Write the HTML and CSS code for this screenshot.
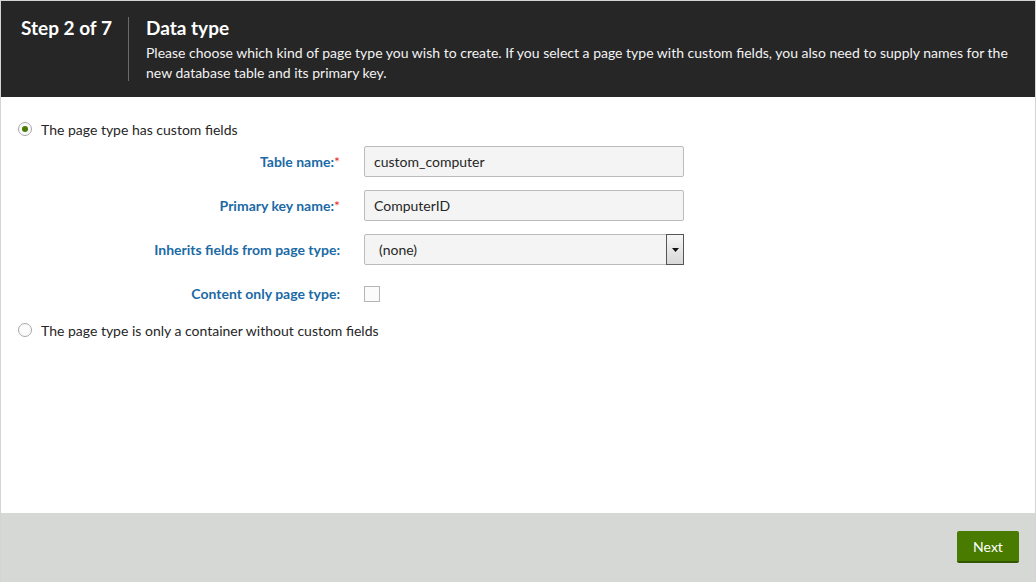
FILE: index.html
```html
<!DOCTYPE html>
<html>
<head>
<meta charset="utf-8">
<link rel="stylesheet" href="styles.css">
</head>
<body>
<div class="frame">
  <header class="header">
    <div class="step">Step 2 of 7</div>
    <div class="info">
      <h1 class="title">Data type</h1>
      <p class="desc">Please choose which kind of page type you wish to create. If you select a page type with custom fields, you also need to supply names for the new database table and its primary key.</p>
    </div>
  </header>
  <main class="content">
    <label class="radio-row">
      <span class="radio checked"></span>
      <span class="radio-label">The page type has custom fields</span>
    </label>
    <div class="form">
      <div class="label">Table name:<span class="req">*</span></div>
      <div class="field"><div class="input">custom_computer</div></div>
      <div class="label">Primary key name:<span class="req">*</span></div>
      <div class="field"><div class="input">ComputerID</div></div>
      <div class="label">Inherits fields from page type:</div>
      <div class="field">
        <div class="select">
          <span class="select-text">(none)</span>
          <span class="select-btn"><svg width="7" height="4" viewBox="0 0 7 4"><path d="M0 0H7L3.5 4Z" fill="#111"/></svg></span>
        </div>
      </div>
      <div class="label">Content only page type:</div>
      <div class="field"><span class="checkbox"></span></div>
    </div>
    <label class="radio-row second">
      <span class="radio"></span>
      <span class="radio-label">The page type is only a container without custom fields</span>
    </label>
  </main>
  <footer class="footer">
    <button class="next">Next</button>
  </footer>
</div>
</body>
</html>
```
FILE: styles.css
```css
* { box-sizing: border-box; }
html, body { margin: 0; padding: 0; }
body {
  font-family: "Lato", "Open Sans", sans-serif;
  font-size: 14px;
  color: #262626;
  background: #fff;
}
.frame {
  width: 1036px;
  height: 582px;
  border: 1px solid #d4d4d4;
  border-bottom: none;
  display: flex;
  flex-direction: column;
}
.header {
  background: #262626;
  color: #fff;
  height: 96px;
  display: flex;
  padding-top: 16px;
  flex-shrink: 0;
}
.step {
  width: 127px;
  padding-left: 20px;
  font-size: 19px;
  font-weight: 700;
  line-height: 20px;
  padding-top: 1px;
}
.info {
  border-left: 1px solid #6a6a6a;
  padding-left: 17px;
  padding-right: 18px;
  height: 64px;
  flex: 1;
}
.title {
  margin: 0;
  font-size: 19px;
  font-weight: 700;
  line-height: 20px;
  padding-top: 1px;
}
.desc {
  margin: 5px 0 0;
  font-size: 14px;
  line-height: 20px;
  color: #f2f2f2;
}
.content {
  flex: 1;
  padding: 22px 0 0 17px;
}
.radio-row {
  display: flex;
  align-items: center;
  gap: 9px;
  height: 20px;
}
.radio-row.second { margin-top: 11px; }
.radio {
  width: 14px;
  height: 14px;
  border-radius: 50%;
  border: 1px solid #a8a8a8;
  background: #fbfbfb;
  display: flex;
  align-items: center;
  justify-content: center;
}
.radio.checked::after {
  content: "";
  width: 6px;
  height: 6px;
  border-radius: 50%;
  background: #497b00;
}
.radio-label { color: #262626; }
.form {
  display: grid;
  grid-template-columns: 322px 320px;
  column-gap: 24px;
  row-gap: 13px;
  margin-top: 7px;
  align-items: center;
}
.label {
  text-align: right;
  color: #1b6aa5;
  font-weight: 700;
}
.req { color: #e4292b; font-weight: 400; }
.field { height: 31px; display: flex; align-items: center; }
.input, .select {
  flex: 1;
  height: 31px;
  background: #f4f4f4;
  border: 1px solid #bcbcbc;
  border-radius: 2px;
  padding-left: 9px;
  display: flex;
  align-items: center;
  color: #262626;
}
.select { padding-left: 14px; justify-content: space-between; padding-right: 0; }
.select-btn {
  width: 18px;
  height: 31px;
  margin: -1px -1px -1px 0;
  border: 1px solid #555;
  background: linear-gradient(#f6f6f6, #d8d8d8);
  display: flex;
  align-items: center;
  justify-content: center;
}
.checkbox {
  width: 16px;
  height: 16px;
  border: 1px solid #b5b5b5;
  background: #fbfbfb;
}
.footer {
  height: 69px;
  background: #d6d8d6;
  display: flex;
  justify-content: flex-end;
  align-items: flex-start;
  padding: 18px 16px 0 0;
  flex-shrink: 0;
}
.next {
  font-family: inherit;
  font-size: 14px;
  color: #fff;
  background: #497b00;
  border: none;
  border-bottom: 2px solid #335700;
  border-radius: 2px;
  width: 62px;
  height: 32px;
  padding: 0;
}
```
